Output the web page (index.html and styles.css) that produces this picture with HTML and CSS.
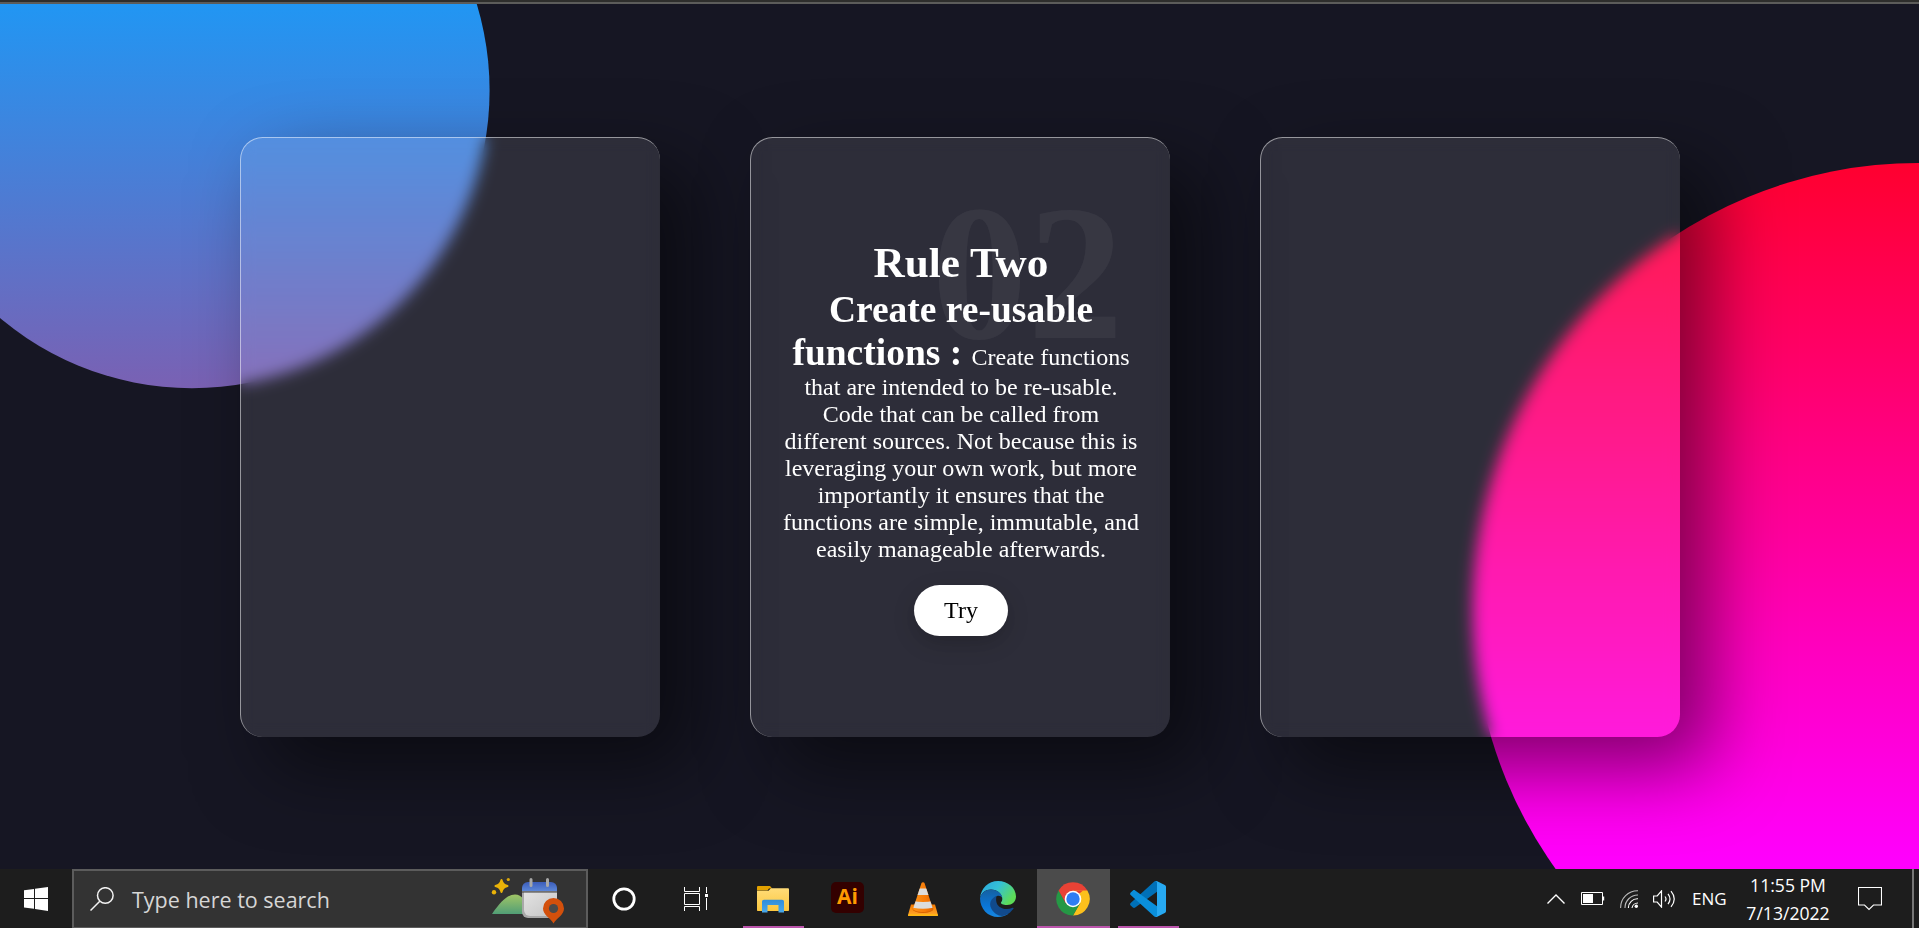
FILE: index.html
```html
<!DOCTYPE html>
<html lang="en">
<head>
<meta charset="utf-8">
<title>Rules</title>
<link rel="stylesheet" href="styles.css">
</head>
<body>
<div class="desktop">
  <div class="chrome-edge"></div>
  <main class="page">
    <section class="cards">
      <article class="card"></article>
      <article class="card">
        <span class="card-number">02</span>
        <div class="content">
          <h3 class="card-title">Rule Two</h3>
          <p class="card-text"><strong class="lead">Create re-usable functions : </strong>Create functions that are intended to be re-usable. Code that can be called from different sources. Not because this is leveraging your own work, but more importantly it ensures that the functions are simple, immutable, and easily manageable afterwards.</p>
          <a class="button">Try</a>
        </div>
      </article>
      <article class="card"></article>
    </section>
  </main>
  <footer class="taskbar">
    <div class="start">
      <svg width="24" height="24" viewBox="0 0 24 24" fill="#fff"><path d="M0 3.3 10 1.9V11H0zM11 1.7 24 0v11H11zM0 12h10v9.8L0 20.600zM11 12h13v12l-13-1.900z"/></svg>
    </div>
    <div class="search">
      <svg class="search-icon" width="24" height="24" viewBox="0 0 24 24" fill="none" stroke="#f2f2f2" stroke-width="1.5"><circle cx="15.300" cy="8.500" r="7.800"/><path d="M9.800 14.200.5 23.500"/></svg>
      <span class="search-text">Type here to search</span>
      <svg class="search-art" width="74" height="48" viewBox="0 0 74 48">
        <defs>
          <linearGradient id="hill" x1="0" y1="0" x2="0" y2="1"><stop offset="0" stop-color="#a0c566"/><stop offset="1" stop-color="#519e76"/></linearGradient>
          <linearGradient id="cal" x1="0" y1="0" x2="0" y2="1"><stop offset="0" stop-color="#3c5dba"/><stop offset="1" stop-color="#5c87d8"/></linearGradient>
          <linearGradient id="sheet" x1="0" y1="0" x2="1" y2="1"><stop offset="0" stop-color="#e3e3e3"/><stop offset="1" stop-color="#c4c4c4"/></linearGradient>
        </defs>
        <path d="M1 37C10 24 17 17.500 24 17.500S35 24 40 37z" fill="url(#hill)"/>
        <path d="M10.500 3c1.200 3.800 2.200 4.800 6 6-3.800 1.200-4.800 2.200-6 6-1.200-3.800-2.200-4.800-6-6 3.800-1.200 4.800-2.200 6-6z" fill="#eab308" stroke="#eab308" stroke-width="2" stroke-linejoin="round"/>
        <circle cx="17.300" cy="2.500" r="1.600" fill="#dca80c"/><circle cx="3" cy="15.300" r="2.200" fill="#eab308"/>
        <path d="M31 14h35v21a6 6 0 0 1-6 6H37a6 6 0 0 1-6-6z" fill="#a9a9a9"/>
        <path d="M33 15h33v18a6 6 0 0 1-6 6H39a6 6 0 0 1-6-6z" fill="url(#sheet)"/>
        <path d="M31 14v-3a6 6 0 0 1 6-6h23a6 6 0 0 1 6 6v3z" fill="url(#cal)"/>
        <path d="M31 15h35" stroke="#3a3a3a" stroke-width="1.200"/>
        <path d="M40 2.500v6M56.500 2.500v6" stroke="#a8a8a8" stroke-width="3" stroke-linecap="round"/>
        <path d="M62.500 46.500C59.500 41 52 38 52 31.500a10.500 10.500 0 0 1 21 0C73 38 65.500 41 62.500 46.500z" fill="#d3500c"/>
        <circle cx="62.500" cy="31.500" r="4.600" fill="#4a4a4a"/>
      </svg>
    </div>
    <div class="tool">
      <svg width="24" height="24" viewBox="0 0 24 24"><circle cx="12" cy="12" r="10.200" fill="none" stroke="#fff" stroke-width="2.800"/></svg>
    </div>
    <div class="tool">
      <svg width="24" height="24" viewBox="0 0 24 24" fill="none" stroke="#fff" stroke-width="1"><path d="M.5 0v4.500h15V0M.5 24v-4.500h15V24M.5 6.500h15v11H.5zM22.500 0v6M22.500 11v12"/><path d="M21 7h3v3h-3z" fill="#fff" stroke="none"/></svg>
    </div>
    <nav class="apps">
      <div class="app app-open">
        <svg width="36" height="36" viewBox="0 0 36 36">
          <defs><linearGradient id="fold" x1="0" y1="0" x2="0" y2="1"><stop offset="0" stop-color="#ffdc78"/><stop offset="1" stop-color="#fbc73f"/></linearGradient><linearGradient id="tray" x1="0" y1="0" x2="0" y2="1"><stop offset="0" stop-color="#2f8ddb"/><stop offset="1" stop-color="#49a8ea"/></linearGradient></defs>
          <path d="M2 9.500V6.300C2 5.500 2.500 5 3.300 5H14c1 0 1.500.4 2.300 1.500L17 7.500h-3L12.500 9.500z" fill="#e2a100"/>
          <path d="M2 9.800h11.500L16 7.200h16.800c.8 0 1.200.5 1.200 1.200V29c0 .6-.4 1-1 1H3c-.6 0-1-.4-1-1z" fill="url(#fold)"/>
          <path d="M7 31.500V20.800c0-1.200.8-2 2-2h18c1.200 0 2 .8 2 2v10.700h-5.500V24h-11v7.500z" fill="url(#tray)"/>
        </svg>
      </div>
      <div class="app">
        <div class="ai-icon">Ai</div>
      </div>
      <div class="app">
        <svg width="36" height="36" viewBox="0 0 36 36">
          <defs><linearGradient id="cone" x1="0" y1="0" x2="1" y2="0"><stop offset="0" stop-color="#ff9a1c"/><stop offset=".6" stop-color="#f67a08"/><stop offset="1" stop-color="#d95f00"/></linearGradient><linearGradient id="base" x1="0" y1="0" x2="0" y2="1"><stop offset="0" stop-color="#f57900"/><stop offset="1" stop-color="#ffa92e"/></linearGradient><clipPath id="body"><path d="M16.500 2c.4-1 2.600-1 3 0l8.500 26c-2 4-18 4-20 0z"/></clipPath></defs>
          <path d="M6 23.500h24l3 10.500c.1.500-.1 1-.7 1H3.700c-.6 0-.8-.5-.7-1z" fill="url(#base)"/>
          <ellipse cx="18" cy="28" rx="10.500" ry="4" fill="#d96400"/>
          <g clip-path="url(#body)"><path d="M5 0h26v34H5z" fill="url(#cone)"/><path d="M5 6.500q13 2 26 0V13q-13 2-26 0zM5 19.500q13 3 26 0V26q-13 3.500-26 0z" fill="#dcdcdc"/></g>
          <path d="M3.200 34h29.600" stroke="#ffc400" stroke-width="1"/>
        </svg>
      </div>
      <div class="app">
        <svg width="36" height="36" viewBox="0 0 36 36">
          <defs><linearGradient id="e1" x1="0" y1="0" x2="1" y2=".5"><stop offset="0" stop-color="#28a5e0"/><stop offset=".5" stop-color="#35c1d6"/><stop offset="1" stop-color="#5ddc58"/></linearGradient><linearGradient id="e2" x1="0" y1="0" x2="0" y2="1"><stop offset="0" stop-color="#1560a0"/><stop offset=".6" stop-color="#0a76d8"/><stop offset="1" stop-color="#1787e0"/></linearGradient></defs>
          <path d="M0 17C1 7 8.500 0 18 0c10 0 18 7 18 15.500 0 5-4 8.500-9 8.500-4 0-6.500-1.300-6-2.500 1-1.500 1.500-2.500 1.200-4.500C21.500 12 16 8.600 11 8.600 5.500 8.600 1.500 12 0 17z" fill="url(#e1)"/>
          <path d="M0 17C1.500 11.500 6 8.500 11 8.500c6 0 11 4 11.300 8.500-2-3.600-8.300-3-8.300 4 0 8 8 12 14 12-3 2-6.500 3-10 3C8 36 0 28 0 17z" fill="url(#e2)"/>
          <path d="M16.500 14.800c-6 3-8 8-5 13.200 3 5.500 9 8.300 14 6.200 3.500-1.500 6-4 7.900-6.500.5-.8-.1-1.300-.9-.9-7 3.200-15.500.2-16.300-6.800-.2-2 0-3.800.3-5.200z" fill="#114a8c"/>
        </svg>
      </div>
      <div class="app app-active">
        <svg width="36" height="36" viewBox="0 0 36 36">
          <path d="M18 18 3.600 9.600A16.600 16.600 0 0 1 32.400 9.600z" fill="#e94235"/>
          <path d="M18 9.600h14.400A16.600 16.600 0 0 1 18 34.600L25.200 22z" fill="#fcc01c"/>
          <path d="M10.800 22.200 3.600 9.600A16.600 16.600 0 0 0 18 34.600l7.200-12.500z" fill="#259845"/>
          <path d="M3.600 9.600 10.800 22.200 18 18 28 9.600z" fill="#e94235"/>
          <circle cx="18" cy="18" r="8.300" fill="#fff"/><circle cx="18" cy="18" r="6.700" fill="#2f7df3"/>
        </svg>
      </div>
      <div class="app app-open">
        <svg width="36" height="36" viewBox="0 0 36 36">
          <path d="M27 0v10.800L5.200 26.600c-.8.600-1.600.6-2.300 0L.7 24.500c-.8-.8-.8-1.800 0-2.500L24.300.6C25 0 26 0 27 0z" fill="#0070b8"/>
          <path d="M27 36V25.200L5.200 9.400c-.8-.6-1.600-.6-2.300 0L.7 11.500c-.8.800-.8 1.800 0 2.500l23.600 21.400c.7.600 1.700.6 2.700.6z" fill="#0a8fdc"/>
          <path d="M25.500.3c.5-.3 1.100-.3 1.700 0l7.600 3.600c.8.400 1.200 1 1.200 1.800v24.600c0 .8-.4 1.400-1.200 1.800l-7.600 3.600c-.6.300-1.200.3-1.700 0 1 .1 1.500-.5 1.500-1.500V1.800c0-1-.5-1.600-1.500-1.500z" fill="#27a9f2"/>
        </svg>
      </div>
    </nav>
    <div class="tray">
      <svg class="tray-icon chevron" width="18" height="10" viewBox="0 0 18 10" fill="none" stroke="#fff" stroke-width="1.400"><path d="M.5 9.500 9 1l8.500 8.500"/></svg>
      <svg class="tray-icon battery" width="24" height="14" viewBox="0 0 24 14"><path d="M.5.5h21v12H.5z" fill="none" stroke="#fff"/><path d="M2 2h10v9H2zM22 4.500h1.200v4H22z" fill="#fff"/></svg>
      <svg class="tray-icon wifi" width="18" height="18" viewBox="0 0 18 18" fill="none" stroke="#fff" stroke-width="1.100"><circle cx="16.300" cy="16.300" r="1.700" fill="#fff" stroke="none"/><g stroke="#bbb"><path d="M.6 18A17 17 0 0 1 18 .7"/><path d="M5 18A12.800 12.800 0 0 1 18 5"/></g><path d="M8.400 18A9 9 0 0 1 18 8.800M12 18a6 6 0 0 1 6-5"/></svg>
      <svg class="tray-icon speaker" width="23" height="18" viewBox="0 0 23 18" fill="none" stroke="#fff" stroke-width="1.200"><path d="M.6 6h3.600L8.500.9v16.200L4.200 12H.6zM12 6.500q2 2.500 0 5M15 3.800q4 5.200 0 10.400M18 1.200q6.500 7.800 0 15.600"/></svg>
      <span class="language">ENG</span>
      <div class="clock"><span>11:55 PM</span><span>7/13/2022</span></div>
      <svg class="tray-icon notes" width="24" height="24" viewBox="0 0 24 24" fill="none" stroke="#fff" stroke-width="1.100"><path d="M.5.5h23v17.500h-8L11 22.500 6.500 18h-6z"/></svg>
      <div class="peek"></div>
    </div>
  </footer>
</div>
</body>
</html>
```
FILE: styles.css
```css
* {
  margin: 0;
  padding: 0;
  box-sizing: border-box;
}

body {
  font-family: "Liberation Serif", "Times New Roman", serif;
  background: #161623;
}

.desktop {
  display: flex;
  flex-direction: column;
  height: 928px;
  overflow: hidden;
}

.chrome-edge {
  flex: none;
  height: 4px;
  background: #2e2e2c;
  border-bottom: 2px solid #5c5c5a;
}

.page {
  position: relative;
  flex: 1;
  display: flex;
  justify-content: center;
  align-items: center;
  background: #161623;
  overflow: hidden;
}

.page::before,
.page::after {
  content: "";
  position: absolute;
  inset: 0;
}

.page::before {
  background: linear-gradient(#f00, #f0f);
  clip-path: circle(30% at right 70%);
}

.page::after {
  background: linear-gradient(#2196f3, #e91e63);
  clip-path: circle(20% at 10% 10%);
}

.cards {
  position: relative;
  z-index: 1;
  display: flex;
  gap: 90px;
}

.card {
  position: relative;
  width: 420px;
  height: 600px;
  display: flex;
  justify-content: center;
  align-items: center;
  border-top: 1px solid rgba(255, 255, 255, 0.5);
  border-left: 1px solid rgba(255, 255, 255, 0.5);
  border-radius: 22.5px;
  background: rgba(255, 255, 255, 0.1);
  box-shadow: 30px 30px 75px rgba(0, 0, 0, 0.5);
  backdrop-filter: blur(7.5px);
  overflow: hidden;
}

.card-number {
  position: absolute;
  top: 25px;
  right: 46px;
  font-size: 192px;
  font-weight: bold;
  line-height: 221px;
  color: rgba(255, 255, 255, 0.05);
}

.content {
  position: relative;
  padding: 30px 29px 30px 31px;
  text-align: center;
}

.card-title {
  font-size: 43.2px;
  line-height: 50px;
  color: #fff;
}

.card-text {
  font-size: 24px;
  line-height: 27px;
  color: #fff;
}

.lead {
  font-size: 37.5px;
  line-height: 43px;
}

.button {
  display: inline-block;
  margin-top: 22.5px;
  padding: 12px 30px;
  border-radius: 30px;
  background: #fff;
  color: #000;
  font-size: 24px;
  line-height: 27px;
  box-shadow: 0 7.5px 22.5px rgba(0, 0, 0, 0.2);
}

.taskbar {
  flex: none;
  display: flex;
  height: 59px;
  background: #1d1d1d;
  color: #fff;
  font-family: "Open Sans", "Noto Sans", sans-serif;
}

.start,
.tool {
  width: 72px;
  display: flex;
  align-items: center;
  justify-content: center;
}

.search {
  width: 516px;
  display: flex;
  align-items: center;
  padding: 0 21px 0 16px;
  border: 2px solid #5c5c5c;
  border-bottom-width: 1px;
  background: #333;
}

.search-text {
  margin-left: 18px;
  padding-top: 2px;
  font-size: 21.5px;
  line-height: 30px;
  color: #d6d6d6;
}

.search-art {
  margin-left: auto;
  margin-top: 3px;
}

.apps {
  display: flex;
  margin-left: 3px;
}

.app {
  width: 75px;
  display: flex;
  align-items: center;
  justify-content: center;
}

.app-open {
  background: linear-gradient(#bb55ac, #bb55ac) 8px 100% / 61px 2px no-repeat;
}

.app-active {
  margin-left: 2px;
  width: 73px;
  background: #4b4b4b;
  border-bottom: 2px solid #bb55ac;
  padding: 2px 1px 0 0;
}

.ai-icon {
  width: 33px;
  height: 31px;
  margin-bottom: 2px;
  border-radius: 5px;
  background: #330000;
  color: #ff9a00;
  font-size: 21px;
  font-weight: 700;
  line-height: 28px;
  text-align: center;
}

.tray {
  display: flex;
  align-items: center;
  margin-left: auto;
}

.battery {
  margin-left: 16px;
}

.wifi {
  margin-left: 15px;
}

.speaker {
  margin-left: 15px;
}

.language {
  margin-left: 16px;
  width: 36px;
  font-size: 17px;
}

.clock {
  display: flex;
  flex-direction: column;
  align-items: center;
  width: 88px;
  margin-left: 16px;
  font-size: 17.600px;
  line-height: 28px;
}

.notes {
  margin-left: 26px;
}

.peek {
  align-self: stretch;
  width: 7px;
  margin-left: 30px;
  border-left: 2px solid #777;
}
```
